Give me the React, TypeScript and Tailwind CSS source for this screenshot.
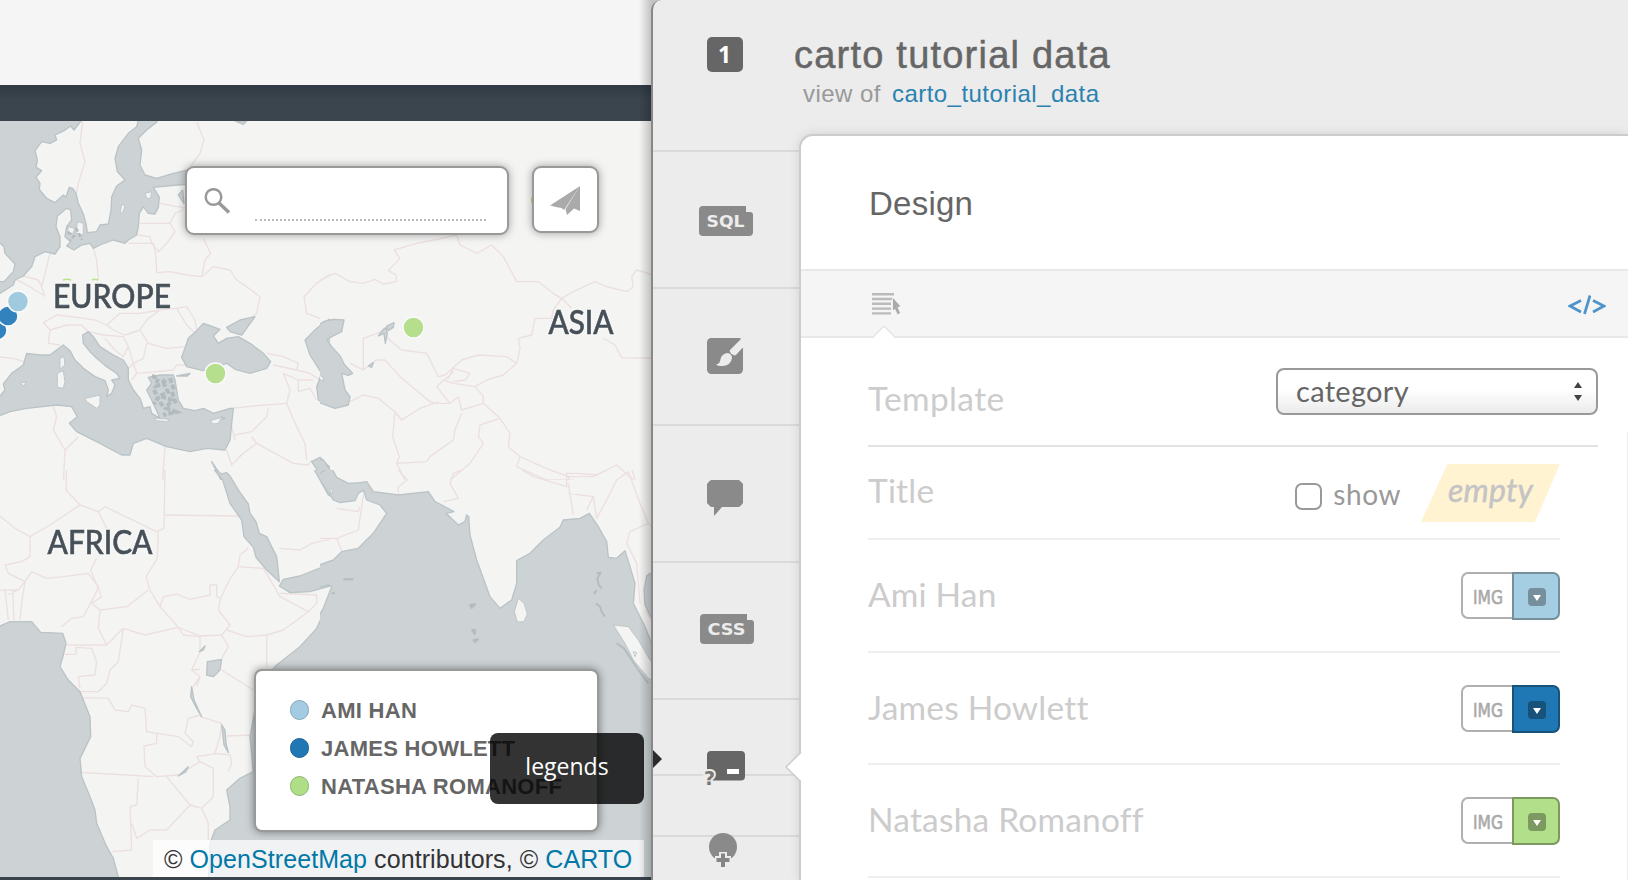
import React from "react";

const WATER = "#cdd3d5";
const LAND = "#f4f4f3";

const tiles = [
  {
    x: 0, y: 80, w: 330, h: 400,
    water: [
      "M-10 100L260 100L240 127L222 150L212 138L192 152L165 165L170 180L150 190L125 185L105 212L112 240L108 262L125 272L108 292L120 310L118 328L140 355L165 368L190 345L198 352L208 322L218 325L228 340L235 370L250 402L258 430L262 458L290 455L300 435L325 432L333 390L335 350L350 318L375 300L352 275L345 235L355 200L385 160L410 140L420 100L480 100L470 127L440 150L415 175L425 210L420 255L435 285L470 295L520 280L570 268L570 312L500 318L460 322L478 352L475 382L465 402L445 400L430 380L418 400L415 440L410 465L385 480L375 490L340 480L300 495L280 505L270 490L245 495L222 510L200 498L212 485L195 470L200 440L215 420L212 390L200 385L172 408L168 440L180 470L180 500L165 522L135 515L105 530L95 560L70 588L45 600L40 615L0 640L-10 640L-10 605L12 605L40 575L45 552L15 520L12 500L-10 480Z",
      "M-10 960L15 930L10 912L35 880L70 855L80 820L120 825L150 825L190 795L210 812L225 840L250 865L285 890L315 902L325 930L320 950L335 940L345 915L335 900L360 895L350 880L320 860L290 835L270 815L250 790L248 765L265 755L280 770L300 800L340 825L370 840L385 865L385 900L400 930L420 955L430 985L450 980L455 1000L480 1015L455 960L440 930L455 910L445 892L480 885L520 885L525 900L530 930L535 960L550 985L585 992L610 985L640 1000L690 985L700 985L695 1030L690 1080L675 1110L620 1105L570 1115L500 1100L440 1075L400 1090L390 1125L365 1125L300 1090L230 1055L208 1030L232 1010L215 980L170 975L80 985L30 995L-10 1010Z",
      "M610 730L590 752L565 775L555 805L545 832L560 860L610 872L680 850L705 868L750 880L800 865L812 845L790 820L750 790L715 770L680 775L655 790L640 768L660 748L632 738Z",
      "M680 742L720 720L765 710L742 742L725 765L690 755Z",
      "M1000 712L970 728L945 750L915 780L930 825L965 880L950 920L955 960L1000 985Z",
      "M935 1145L960 1132L982 1155L1000 1170L1000 1210L965 1190Z",
      "M635 1145L662 1185L690 1210L668 1210Z",
      "M705 123L740 123L730 133Z", "M530 888L570 880L562 888Z", "M665 1010L675 1015L668 1018Z",
      "M535 345L548 330L552 370Z",
    ],
    land: [
      "M180 835L192 830L195 855L180 868Z", "M172 880L190 872L195 905L190 925L172 922Z", "M255 955L300 945L300 975L290 985L260 965Z",
      "M630 1022L665 1012L655 1030L640 1032Z", "M60 910L78 905L72 918Z", "M462 1014L510 1018L500 1025L470 1022Z", "M205 440L225 445L218 462L202 462Z", "M232 425L250 430L250 465L228 460Z",
      "M360 400L365 372L375 378L368 398Z", "M435 340L455 335L452 355L440 355Z",
    ],
    border: [
      "M248 125L240 190L255 245L235 310L228 345", "M590 125L612 180L600 220L570 262", "M480 370L560 385", "M420 430L510 430L525 455L500 490L475 515L455 490L450 470L415 465", "M510 430L525 400L550 390", "M385 490L460 490L468 530L470 578",
      "M470 578L510 575L560 585L605 590L640 560L690 570L710 600L740 620L780 650L770 700L750 715", "M605 590L615 540L632 520L610 475", "M280 505L290 540L295 600", "M150 520L135 580L125 620L135 650", "M48 598L80 615L130 645M70 588L115 600L125 620",
      "M130 728L170 705L230 712L285 720L320 735L360 700L420 700L480 690L530 685L560 735L585 760", "M130 728L150 750L145 790L180 795M150 750L200 735L245 735L265 755", "M320 735L340 750L375 765L420 750L440 720L480 690M420 750L445 790L500 805L555 800", "M265 755L310 765L370 770L385 800L370 830L345 810L315 775M385 800L400 850L385 865M400 850L430 835L440 790M400 850L410 880L470 875L520 870L530 855L560 855M410 880L395 900",
      "M530 685L560 680L585 720L590 750", "M-10 830L40 835L72 845", "M160 980L170 1010L160 1050L195 1110L235 1070M195 1110L190 1210", "M495 1100L487 1210", "M695 985L760 978L860 970L870 930L850 880", "M705 1080L695 1040M705 1065L755 1055L800 1010L805 985M755 1070L770 1090L730 1120L695 1155L680 1110M770 1090L880 1150L925 1155L935 1140M860 970L890 1040L915 1090L920 1140", "M800 820L850 830L895 850L890 870L930 880L960 900M820 855L890 870M850 880L895 900L895 935L930 925L950 960M895 900L940 900", "M1000 575L950 610L912 650L920 700L960 715",
    ],
  },
  {
    x: 320, y: 80, w: 340, h: 400,
    water: [
      "M-10 740L10 725L40 718L72 720L65 755L35 770L20 780L35 800L62 830L72 852L98 880L85 886L65 880L75 930L90 950L85 975L45 985L-10 965Z",
      "M-10 1138L10 1140L30 1170L45 1190L55 1215L-10 1215Z", "M175 768L188 750L198 742L202 760L196 790L192 760Z", "M200 738L222 728L220 742L205 752Z", "M145 858L160 848L155 862Z",
    ],
    land: ["M-5 885L8 890L12 905L-5 895Z"],
    border: [
      "M-10 605L45 580L90 605L130 610L165 598L190 612L230 605L228 585L205 572L240 535L222 510L290 490L350 478L410 465L420 495L470 520L515 495L550 530L590 605L655 605L700 640L725 655L760 635L825 605L860 620L920 635L940 620L935 590L950 570L1000 585",
      "M725 655L700 690L695 715L645 715L635 765L595 775L600 805L590 850L550 885L500 900L465 920L490 950L490 970M590 850L560 830L475 825L425 840L375 885L355 890L320 820L245 810L215 785L185 755L130 775L130 870L90 850M130 870L170 840L195 840L240 890L330 965L355 970L390 970L350 920L370 900L400 910L465 920",
      "M725 655L755 685M850 775L885 795L905 833L1000 835", "M385 895L400 865L450 880L435 900L400 905M400 875L375 900", "M90 965L130 945L175 955L225 995L245 1020L300 985L355 965M390 970L415 950L425 990L490 970M225 995L218 1070L238 1130L230 1150L260 1210M230 1150L320 1145L330 1130L400 1080L405 1050L425 1000",
      "M490 970L540 1015L480 1035L475 1070L490 1090L450 1150L390 1200M540 1015L570 1060L565 1100L600 1130L590 1160L680 1200L760 1200M600 1130L690 1170L745 1190L820 1190L890 1155L950 1210M745 1190L750 1215",
    ],
  },
  {
    x: 0, y: 470, w: 330, h: 410,
    water: [
      "M635 -10L665 12L680 8L690 18L718 65L745 102L750 130L768 155L778 190L800 200L830 260L838 335L800 300L768 262L760 232L732 200L725 150L690 100L668 30Z",
      "M838 348L850 328L900 318L1000 278L1000 380L982 405L950 475L900 530L830 585L780 640L750 800L760 905L720 925L680 960L690 1010L690 1050L645 1080L630 1120L625 1240L1010 1240L1010 343L930 365L870 368Z",
      "M-10 472L30 455L95 455L122 487L188 490L198 520L190 555L180 590L205 630L240 665L270 740L272 800L240 865L245 920L270 980L285 1020L290 1060L320 1130L340 1165L360 1240L-10 1240Z",
      "M938 -10L960 30L985 75L1010 90L1010 -10Z", "M622 575L665 568L660 600L640 620L620 615Z", "M575 650L582 690L605 740L590 715L572 680Z", "M665 765L675 780L678 820L685 848L672 825Z", "M598 545L615 528L610 540Z", "M535 918L565 890L558 905Z",
    ],
    land: [],
    border: [
      "M200 -10L198 60L240 105L150 165L90 200L90 260L65 275L15 285L25 310L75 335L55 360L-10 360M-10 130L45 175L90 200M240 105L295 125L320 175M295 125L315 110L470 185L492 175L495 -10M495 135L715 138M475 185L472 265L438 320L450 360L480 410L490 380L530 372L570 388L630 375L630 345L650 345L650 380L662 385L688 330L715 290L720 255L745 235",
      "M15 360L25 450M38 360L42 450M75 335L65 400L60 450M55 360L22 375M75 335L95 305L140 325L190 320L265 310L295 350L285 375L250 440L215 445L185 470M290 265L272 300L305 380L275 400L300 420L380 410L445 360M300 420L295 475L320 525L200 525M320 525L370 475L435 495L535 472L480 410M535 472L600 498L665 495L690 465L655 420L662 385",
      "M370 475L355 575L330 600L320 640L295 665L240 665M195 553L228 553L228 532L275 535L290 575L285 615L235 620L240 655M245 683L325 685L345 720L385 725L395 705L435 715L440 785L535 800L575 830L580 815L555 790L565 745L600 735M440 785L470 790L470 820L432 828L435 890L470 920L535 915L600 875L590 860L655 850M245 908L330 912L460 920M500 920L570 1005L605 1015L640 980L640 895L600 875M415 925L410 1005L390 1010L395 1140L335 1145M395 1060L410 1105L450 1080L500 1080L570 1005M605 1015L625 1060L625 1110",
      "M535 472L550 495L600 500L600 545L575 600L600 620L580 650M575 600L600 598M665 495L685 530L665 565M680 480L740 500L800 495L850 480L925 425L840 380L820 345L790 295L715 290M840 370L950 375L950 400L925 425M800 495L800 590M665 600L760 660M600 740L665 760L660 800L645 850L690 855L695 880L685 905M680 798L765 795M590 650L600 620",
      "M838 235L900 240L935 220L1000 205",
    ],
  },
  {
    x: 320, y: 470, w: 340, h: 410,
    water: [
      "M32 -10L50 22L85 40L120 38L140 35L160 65L235 75L325 65L345 95L365 105L402 125L378 130L415 165L435 155L440 135L446 140L450 195L470 270L510 380L540 415L575 390L590 340L590 272L630 250L670 210L720 172L730 150L780 145L808 130L835 170L860 215L865 262L890 265L915 242L930 290L945 340L940 400L975 470L995 520L1030 540L1030 1240L-10 1240L-10 450L10 415L35 350L25 345L-10 355L-10 288L40 270L65 245L115 235L160 190L200 130L180 105L140 90L130 60L115 70L105 92L60 98L40 90L20 60L-10 15Z",
      "M990 310L1030 310L1030 440L992 440L975 405L972 360L980 318Z",
    ],
    land: [
      "M595 385L612 400L622 432L612 455L592 456L583 425Z", "M880 465L925 470L955 510L990 570L1030 610L1030 650L985 625L940 570L915 520Z", "M940 545L950 548L945 560Z", "M948 588L958 592L955 605Z", "M28 55L38 60L35 75Z",
    ],
    border: [
      "M225 -10L262 30L235 50L235 72M450 -10L400 10L390 40L415 85L370 95M130 75L115 180L50 205L-10 205M50 205L65 242M50 115L115 125L118 110M590 -10L640 20L740 50L740 10L770 10L830 15L880 -10L935 -5L945 30M745 40L760 135M745 70L820 80L800 120M820 80L830 145L860 90L890 30L925 5M925 5L960 100L985 160L930 185L920 220L950 280L960 400M1000 175L985 160M975 420L1000 460",
    ],
    specks: ["M450 405L466 402L455 414Z", "M456 480L466 480L464 492Z", "M460 510L474 508L466 516Z", "M830 310L842 308L832 325L836 345L845 355M830 360L822 372M828 400L840 410L845 425L855 440", "M70 328L100 328M35 370L45 370", "M890 520L912 535L935 570L955 600L985 640"],
  },
];

function WorldMap() {
  return (
    <svg className="block h-full w-full" viewBox="0 121 651 756" preserveAspectRatio="none">
      <rect x="0" y="121" width="651" height="756" fill={LAND} />
      {tiles.map((t, i) => (
        <svg key={i} x={t.x} y={t.y} width={t.w} height={t.h} viewBox={`0 0 ${t.w * 3} ${t.h * 3}`} strokeLinejoin="round">
          <g fill="none" stroke="#ecdfe0" strokeWidth="4">{t.border.map((d, k) => <path key={k} d={d} />)}</g>
          <g fill={WATER} stroke="#bac3c6" strokeWidth="4">{t.water.map((d, k) => <path key={k} d={d} />)}</g>
          <g fill={LAND} stroke="#bec7ca" strokeWidth="3">{t.land.map((d, k) => <path key={k} d={d} />)}</g>
          <g fill="none" stroke="#b3bdc0" strokeWidth="6">{(t.specks || []).map((d, k) => <path key={k} d={d} />)}</g>
        </svg>
      ))}
      <path d="M152 376L158 378L156 386L164 384L168 392L160 396L172 400L166 408L176 412L163 415M154 390L158 398L154 404M170 378L174 390M162 380L168 384M160 402L164 408M172 392L176 404" fill="none" stroke="#b1bbbf" strokeWidth="4" strokeDasharray="5 2" />
      <path d="M68 232L74 236L70 240M76 228L82 240" fill="none" stroke="#b1bbbf" strokeWidth="2.5" strokeDasharray="4 2" />
      <path d="M63 280Q67 278.500 71 280M92 280Q95 278.500 98 280" fill="none" stroke="#b9e388" strokeWidth="1.500" />
      <g stroke="#fafafa" strokeWidth="1.500">
        <circle cx="-3" cy="330" r="10" fill="#3182bd" />
        <circle cx="8" cy="316" r="10" fill="#3182bd" />
        <circle cx="18" cy="301.500" r="10.500" fill="#a0cbdf" />
        <circle cx="215.500" cy="373.500" r="10.500" fill="#b5df8c" />
        <circle cx="413.500" cy="327.500" r="10.500" fill="#b5df8c" />
        <circle cx="540" cy="200" r="10" fill="#b5df8c" />
      </g>
      <g fill="#475058" stroke="#475058" strokeWidth=".6" className="drop-shadow-[0_0_1.5px_white]" fontFamily="Lato, sans-serif" fontWeight="500" fontSize="32.500">
        <text x="53" y="307.500" textLength="118" lengthAdjust="spacingAndGlyphs">EUROPE</text>
        <text x="548.500" y="333.500" textLength="65" lengthAdjust="spacingAndGlyphs">ASIA</text>
        <text x="47.500" y="553.500" textLength="105" lengthAdjust="spacingAndGlyphs">AFRICA</text>
      </g>
    </svg>
  );
}

function CodeTag({ label }: { label: string }) {
  return (
    <svg width="54" height="30" viewBox="0 0 54 30">
      <path d="M4 0H47V6H51Q54 6 54 9V26Q54 30 50 30H4Q0 30 0 26V4Q0 0 4 0Z" fill="#8a8a8a" />
      <text x="7.500" y="21.200" textLength="38" lengthAdjust="spacingAndGlyphs" fill="#ececec" fontFamily="'DejaVu Sans', sans-serif" fontWeight="700" fontSize="16">{label}</text>
    </svg>
  );
}

const legend = [
  { name: "AMI HAN", dot: "bg-[#a3cce2] border-[#86a7b8]" },
  { name: "JAMES HOWLETT", dot: "bg-[#1f78b4] border-[#1b6292]" },
  { name: "NATASHA ROMANOFF", dot: "bg-[#aedf86] border-[#8fb570]" },
];

const rows = [
  { name: "Ami Han", h: "h-[113px]", color: "bg-[#a6cee3] border-[#768f9c]", inner: "bg-[#768f9c]" },
  { name: "James Howlett", h: "h-[112px]", color: "bg-[#1f78b4] border-[#17527b]", inner: "bg-[#17527b]" },
  { name: "Natasha Romanoff", h: "h-[113px]", color: "bg-[#b2df8a] border-[#7c9a60]", inner: "bg-[#7c9a60]" },
];

const cell = "flex shrink-0 justify-center border-b-2 border-[#dadada]";

export default function App() {
  return (
    <div className="flex h-[880px] w-[1628px] overflow-hidden bg-[#c4c4c4] font-['Liberation_Sans',Arial,sans-serif]">
      <section className="relative flex w-[651px] shrink-0 flex-col bg-[#3a444d]">
        <div className="h-[85px] bg-[#f5f5f5]" />
        <div className="h-[36px] bg-linear-to-b from-[#2f3a44] to-[#3b454d] to-40%" />
        <div className="relative h-[756px] overflow-hidden">
          <WorldMap />
          <div className="absolute top-[45px] left-[185px] flex h-[69px] w-[324px] items-start rounded-[9px] border-2 border-[#999] bg-white shadow-[0_0_9px_rgba(0,0,0,0.35)]">
            <svg className="mt-[20px] ml-[17px]" width="27" height="27" viewBox="0 0 27 27" fill="none" stroke="#999">
              <circle cx="9.500" cy="9" r="7.800" strokeWidth="2.500" />
              <path d="M14.500 14.500L25 24.500" strokeWidth="3.500" />
            </svg>
            <div className="mt-[51px] ml-[24px] w-[231px] border-b-2 border-dotted border-[#bbb]" />
          </div>
          <div className="absolute top-[45px] left-[532px] flex h-[67px] w-[67px] items-center justify-center rounded-[9px] border-2 border-[#999] bg-white shadow-[0_0_9px_rgba(0,0,0,0.35)]">
            <svg className="-ml-[2px] mt-[2px]" width="30" height="30" viewBox="0 0 30 30" fill="#aaa">
              <path d="M0 19.500L30 0L14 24L11.500 22L6 21Z" /><path d="M30 0V25L24 22.500L17 29L15.500 23Z" />
            </svg>
          </div>
          <div className="absolute top-[548px] left-[254px] flex h-[163px] w-[345px] flex-col gap-[14px] rounded-[8px] border-2 border-[#999] bg-white pt-[27px] pl-[34px] shadow-[0_0_9px_rgba(0,0,0,0.45)]">
            {legend.map((l) => (
              <div key={l.name} className="flex h-6 items-center">
                <span className={"h-[20px] w-[19px] rounded-full border " + l.dot} />
                <span className="mt-[2px] ml-[12px] text-[22px] leading-6 font-bold tracking-[0.28px] whitespace-nowrap text-[#666]">{l.name}</span>
              </div>
            ))}
          </div>
          <div className="absolute top-[719px] left-[153px] flex h-[37px] w-[491px] items-center bg-white/70 pt-[3px] pl-[11px] text-[25px] tracking-[0.08px] whitespace-pre text-[#333]">
            <span>© <span className="text-[#0078a8]">OpenStreetMap</span> contributors, © <span className="text-[#0078a8]">CARTO</span></span>
          </div>
        </div>
        <div className="pointer-events-none absolute top-0 right-0 h-full w-[12px] bg-linear-to-r from-transparent to-black/20" />
        <div className="absolute top-[733px] left-[490px] flex h-[71px] w-[154px] items-center justify-center rounded-[8px] bg-black/80 pb-[5px] font-['Open_Sans',sans-serif] text-[23px] text-white">legends</div>
      </section>

      <section className="relative flex w-[977px] shrink-0 rounded-tl-[10px] border-l-2 border-[#888] bg-[#ececec]">
        <svg className="absolute top-[750px] left-0" width="9" height="18"><path d="M0 0L9 9L0 18Z" fill="#2b2b2b" /></svg>
        <nav className="flex w-[146px] shrink-0 flex-col overflow-hidden">
          <div className={cell + " h-[152px] pt-[37px] pr-[3px]"}>
            <span className="flex h-[35px] w-[36px] items-center justify-center rounded-[5px] bg-[#666] font-['Open_Sans',sans-serif] text-[23px] font-bold text-white">1</span>
          </div>
          <div className={cell + " h-[137px] pt-[54px]"}><CodeTag label="SQL" /></div>
          <div className={cell + " h-[137px] pt-[49px] pr-[3px]"}>
            <svg width="36" height="36" viewBox="0 0 36 36">
              <rect width="36" height="36" rx="4.500" fill="#8a8a8a" />
              <path d="M37 1V8L29 17Q27 18 24 16Q22 14 23 12L34 1Z" fill="#ececec" />
              <path d="M22 13.500Q23 17 26 17.500" fill="none" stroke="#8a8a8a" strokeWidth="1.500" />
              <path d="M21 15Q25 16 25 20Q24 27 16 28Q11 28.500 9 26.500Q13 26 13.500 21Q15 15.500 21 15Z" fill="#ececec" />
            </svg>
          </div>
          <div className={cell + " h-[137px] pt-[54px] pr-[3px]"}>
            <svg width="36" height="36" viewBox="0 0 36 36"><path d="M4.500 0H31.500Q32.500 0 36 4V23Q33 27 31.500 27H15L7 36V27H4.500Q3.500 27 0 23V4Q3 0 4.500 0Z" fill="#8a8a8a" /></svg>
          </div>
          <div className={cell + " h-[137px] pt-[51px] pl-[2px]"}><CodeTag label="CSS" /></div>
          <div className={cell + " h-[76px] pt-[51px] pr-[3px]"}>
            <svg className="relative z-10 shrink-0 overflow-visible" width="42" height="36" viewBox="0 0 42 36">
              <rect x="3" width="38" height="29.500" rx="4" fill="#666" />
              <rect x="23" y="18" width="12" height="5" fill="#fff" />
              <text x="0" y="33.500" fontFamily="'DejaVu Sans', sans-serif" fontWeight="700" fontSize="19" fill="#777" stroke="#ececec" strokeWidth="4" style={{ paintOrder: "stroke" }}>?</text>
            </svg>
          </div>
          <div className={cell + " h-[61px]"} />
          <div className="flex justify-center pr-[7px]">
            <svg className="relative -mt-[4px]" width="28" height="34" viewBox="0 0 28 34">
              <circle cx="14" cy="14" r="14" fill="#8a8a8a" />
              <path d="M14 19V34M6 27H22" stroke="#ececec" strokeWidth="8" />
              <path d="M14 20.500V34M7.500 27H20.500" stroke="#858585" strokeWidth="4" />
            </svg>
          </div>
        </nav>

        <div className="flex w-[829px] flex-col">
          <header className="flex h-[134px] shrink-0 flex-col text-[#666]">
            <h1 className="mt-[33px] -ml-[5px] text-[38px] leading-[44px] tracking-[1.22px] whitespace-nowrap [-webkit-text-stroke:0.5px_#666]">carto tutorial data</h1>
            <p className="mt-[3px] ml-[4px] text-[24px] leading-[28px] tracking-[0.46px] whitespace-nowrap text-[#999]">view of<span className="ml-[11px] text-[#2a82b0]">carto_tutorial_data</span></p>
          </header>
          <main className="relative flex grow flex-col rounded-tl-[14px] border-t-2 border-l-2 border-[#ccc] bg-white shadow-[0_0_11px_rgba(0,0,0,0.11)]">
            <svg className="absolute top-[615px] -left-[16px]" width="18" height="32"><path d="M18 0L1 16L18 32Z" fill="#fff" /><path d="M16 1L1 16L16 31" fill="none" stroke="#ccc" strokeWidth="1.500" /></svg>
            <h2 className="flex h-[133px] shrink-0 items-center pt-[2px] pl-[68px] text-[33px] tracking-[0.25px] text-[#666]">Design</h2>
            <div className="relative flex h-[69px] shrink-0 items-start justify-between border-y-2 border-[#e8e8e8] bg-[#f5f5f5] pr-[22px] pl-[71px]">
              <svg className="mt-[22px]" width="29" height="24" viewBox="0 0 29 24">
                <path d="M0 1.200H22M0 6H20M0 10.800H19M0 15.600H19M0 20.400H19" stroke="#bbb" strokeWidth="2.400" />
                <path d="M20.500 4L29 13.500L26 14.500L28.500 20L25.500 22L23 16.500L20.500 18Z" fill="#aaa" stroke="#f8f8f8" strokeWidth=".8" />
              </svg>
              <svg className="mt-[24px]" width="38" height="20" viewBox="0 0 38 20" fill="none" stroke="#4f93ca" strokeWidth="2.700">
                <path d="M13 5.500L2 11L13 17M25 5.500L36 11L25 17M22 .5L16.500 19" />
              </svg>
              <svg className="absolute top-[54px] left-[71px]" width="24" height="13"><path d="M0 13L12 1L24 13" fill="#fff" stroke="#e5e5e5" strokeWidth="1.500" /></svg>
            </div>
            <div className="flex grow flex-col pl-[67px] font-['Lato',sans-serif] text-[33.500px] tracking-[0.2px] text-[#ccc] [font-variant-ligatures:none]">
              <div className="flex h-[109px] w-[730px] shrink-0 items-start justify-between border-b-2 border-[#e2e2e2]">
                <span className="mt-[40px] leading-10 tracking-[0.35px]">Template</span>
                <div className="mt-[30px] flex h-[47px] w-[322px] items-center justify-between rounded-[8px] border-2 border-[#999] bg-linear-to-b from-white from-45% to-[#ebebeb] pr-[14px] pl-[18px] text-[29px] text-[#666]">
                  <span className="-mt-[2px] tracking-[0.3px]">category</span>
                  <svg width="8" height="19" fill="#444"><path d="M4 0L8 6H0ZM4 19L8 13H0Z" /></svg>
                </div>
              </div>
              <div className="flex h-[93px] w-[692px] shrink-0 items-start border-b-2 border-[#eee]">
                <span className="mt-[23px] leading-10">Title</span>
                <span className="mt-[36px] ml-auto h-[27px] w-[27px] rounded-[7px] border-2 border-[#999]" />
                <span className="mt-[27px] ml-[11px] text-[28px] leading-10 tracking-[0.6px] text-[#999]">show</span>
                <div className="mt-[17px] ml-[20px] flex h-[58px] w-[139px] items-center justify-center bg-[#fff3d2] pb-[6px] text-[32px] text-[#c4c4c4] italic [-webkit-text-stroke:0.5px_#c4c4c4] [clip-path:polygon(19%_0,100%_0,82%_100%,0_100%)]">empty</div>
              </div>
              {rows.map((r) => (
                <div key={r.name} className={"flex w-[692px] shrink-0 items-start justify-between border-b-2 border-[#eee] " + r.h}>
                  <span className="mt-[34px] leading-10">{r.name}</span>
                  <div className="mt-[32px] flex">
                    <div className="flex h-[47px] w-[51px] items-center justify-center rounded-l-[7px] border-2 border-r-0 border-[#b0b0b0] pt-[2px] pl-px">
                      <svg className="overflow-visible" width="30" height="20"><text x="0" y="17" textLength="30" lengthAdjust="spacingAndGlyphs" fontFamily="'DejaVu Sans', sans-serif" fontSize="20" letterSpacing="0" fill="#aaa" stroke="#aaa" strokeWidth=".7">IMG</text></svg>
                    </div>
                    <div className={"flex h-[48px] w-[48px] items-center justify-center rounded-r-[7px] border-2 " + r.color}>
                      <span className={"mt-[2px] ml-[2px] flex h-[18px] w-[18px] items-center justify-center rounded-[4px] " + r.inner}>
                        <svg className="mt-px" width="8" height="6" fill="#fff"><path d="M0 0H8L4 6Z" /></svg>
                      </span>
                    </div>
                  </div>
                </div>
              ))}
            </div>
            <div className="absolute top-[296px] right-0 h-[448px] w-px bg-[#eee]" />
          </main>
        </div>
      </section>
    </div>
  );
}
